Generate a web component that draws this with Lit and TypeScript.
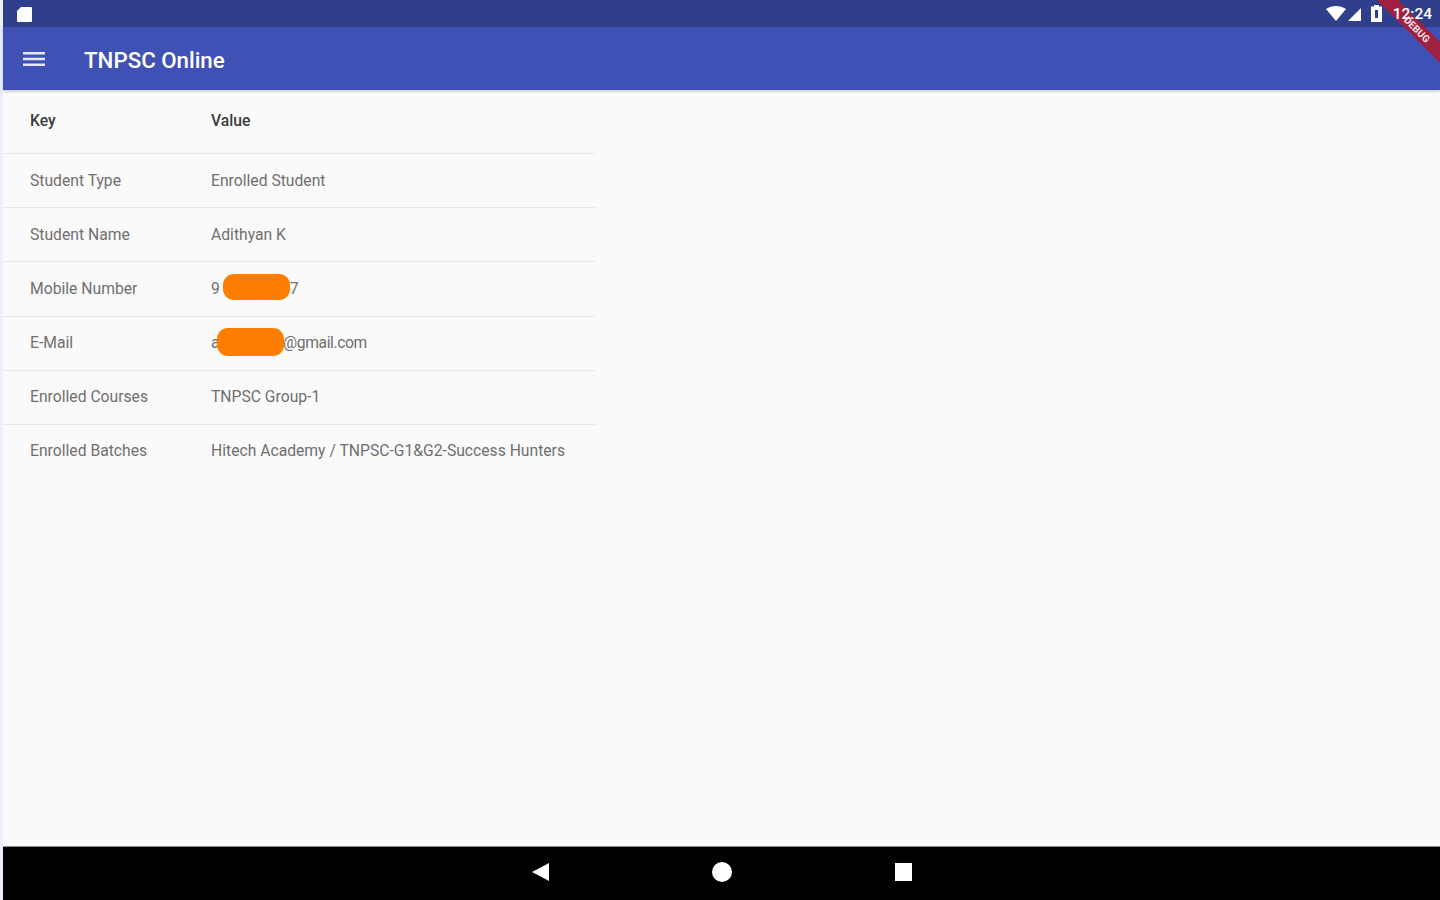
import { LitElement, html, css, svg } from "lit";
import { customElement } from "lit/decorators.js";

const rows: [string, unknown][] = [
  ["Student Type", "Enrolled Student"],
  ["Student Name", "Adithyan K"],
  ["Mobile Number", html`<span class="masked">9<span class="gap g1"></span>7<i class="blot b1"></i></span>`],
  ["E-Mail", html`<span class="masked">a<span class="gap g2"></span><span class="tight">@gmail.com</span><i class="blot b2"></i></span>`],
  ["Enrolled Courses", "TNPSC Group-1"],
  ["Enrolled Batches", "Hitech Academy / TNPSC-G1&G2-Success Hunters"],
];

@customElement("app-root")
export class AppRoot extends LitElement {
  static styles = css`
    :host { display: block; height: 900px; overflow: hidden; position: relative; font-family: Roboto, "Liberation Sans", sans-serif; background: #eaf1fb; }
    .device { margin-left: 3px; height: 900px; display: flex; flex-direction: column; background: #fafafa; }
    .status { height: 27px; flex: none; background: #303f8c; display: flex; align-items: center; color: #fff; padding: 0 8px 0 12px; }
    .status .sd { width: 18px; height: 18px; display: block; }
    .status .spacer { flex: 1; }
    .status .wifi { width: 20px; height: 15px; display: block; margin-right: 1px; }
    .status .cell { width: 15px; height: 14px; display: block; margin-right: 9px; }
    .status .batt { width: 11px; height: 17px; display: block; margin-right: 9px; }
    .status .slot { width: 41px; }
    .bar { height: 63px; flex: none; background: #3f51b5; display: flex; align-items: center; color: #fff; box-shadow: 0 1px 3px rgba(0,0,0,.25); z-index: 1; padding-left: 20px; }
    .bar svg { width: 22px; height: 16px; display: block; margin-right: 39px; }
    .bar h1 { margin: 2px 0 0; font-size: 22.3px; font-weight: 500; }
    .table { width: 592px; color: #6f6f6f; font-size: 15.7px; }
    .row { display: grid; grid-template-columns: 181px 1fr; padding: 0 0 1px 27px; height: 54px; align-items: center; border-bottom: 1px solid #e8e8e8; box-sizing: border-box; white-space: nowrap; }
    .row:last-child { border-bottom: none; }
    .row.head { height: 64px; color: #3c3c3c; font-weight: 500; padding-bottom: 2px; }
    .row.tall { height: 55px; }
    .row.raised { padding-bottom: 3px; }
    .masked { position: relative; display: inline-block; }
    .gap { display: inline-block; }
    .g1 { width: 70px; }
    .g2 { width: 63.500px; }
    .tight { letter-spacing: -0.4px; }
    .blot { position: absolute; background: #ff7d00; border-radius: 11px; height: 26px; }
    .b1 { left: 12px; top: -5px; width: 67px; }
    .b2 { left: 6px; top: -5px; width: 67px; height: 28px; }
    .fill { flex: 1; }
    .nav { height: 54px; flex: none; background: #000; border-top: 1px solid #8c8c8c; box-sizing: border-box; display: grid; grid-template-columns: repeat(3, 20px); justify-content: center; column-gap: 161px; align-items: center; padding-bottom: 4px; }
    .nav svg { width: 20px; height: 20px; display: block; }
    .banner { position: absolute; top: 22px; right: -42px; width: 130px; height: 15px; background: #a0213f; transform: rotate(45deg); color: #f6e3e6; font-size: 10px; line-height: 15px; text-align: center; font-weight: 700; z-index: 2; }
    .time-over { position: absolute; top: 5px; right: 8px; color: #fff; font-size: 15.500px; font-weight: 500; z-index: 3; }
  `;

  render() {
    return html`
      <div class="device">
        <div class="status">
          <svg class="sd" viewBox="0 0 18 18"><path fill="#fff" d="M6 2h10a1 1 0 0 1 1 1v13a1 1 0 0 1-1 1H3a1 1 0 0 1-1-1V6z"/></svg>
          <span class="spacer"></span>
          <svg class="wifi" viewBox="0 0 20 15"><path fill="#fff" d="M0 3C6-1 14-1 20 3L10 15z"/></svg>
          <svg class="cell" viewBox="0 0 15 14"><path fill="#fff" d="M14 1v13H1z"/></svg>
          <svg class="batt" viewBox="0 0 11 17"><path fill="#fff" fill-rule="evenodd" d="M3 0h5v1.500h3V17H0V1.500h3zM4 5v8h3V5z"/></svg>
          <span class="slot"></span>
        </div>
        <div class="bar">
          <svg viewBox="0 0 22 16"><path fill="#e4e7f6" d="M0 1h22v2.600H0zM0 6.700h22v2.600H0zM0 12.400h22V15H0z"/></svg>
          <h1>TNPSC Online</h1>
        </div>
        <div class="table">
          <div class="row head"><span>Key</span><span>Value</span></div>
          ${rows.map(([k, v], i) => html`<div class="row ${i === 2 ? "tall" : ""} ${i > 2 ? "raised" : ""}"><span>${k}</span><span>${v}</span></div>`)}
        </div>
        <div class="fill"></div>
        <div class="nav">
          <svg viewBox="0 0 20 20">${svg`<path fill="#fff" d="M1 10 18 1v18z"/>`}</svg>
          <svg viewBox="0 0 20 20">${svg`<circle fill="#fff" cx="10" cy="10" r="10"/>`}</svg>
          <svg viewBox="0 0 20 20">${svg`<rect fill="#fff" x="2" y="1" width="17" height="18"/>`}</svg>
        </div>
      </div>
      <div class="banner">DEBUG</div>
      <div class="time-over">12:24</div>
    `;
  }
}
